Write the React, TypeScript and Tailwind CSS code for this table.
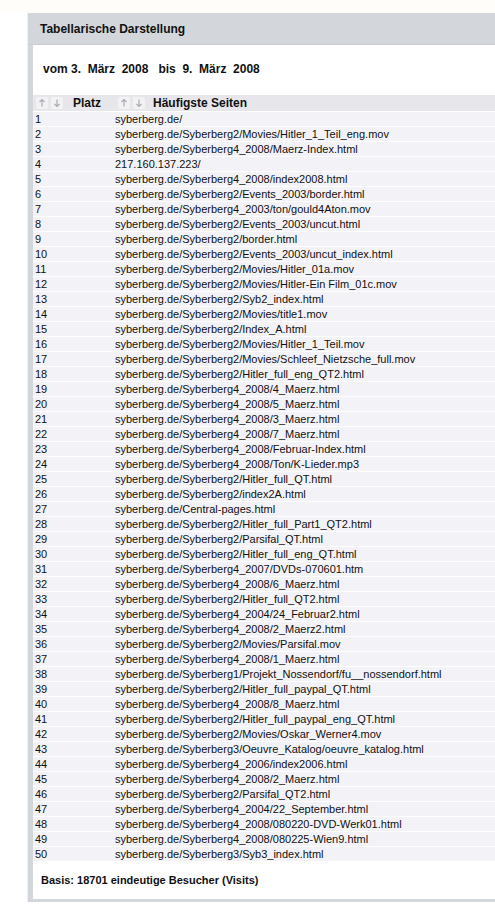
import React from 'react';

const pages = [
  'syberberg.de/',
  'syberberg.de/Syberberg2/Movies/Hitler_1_Teil_eng.mov',
  'syberberg.de/Syberberg4_2008/Maerz-Index.html',
  '217.160.137.223/',
  'syberberg.de/Syberberg4_2008/index2008.html',
  'syberberg.de/Syberberg2/Events_2003/border.html',
  'syberberg.de/Syberberg4_2003/ton/gould4Aton.mov',
  'syberberg.de/Syberberg2/Events_2003/uncut.html',
  'syberberg.de/Syberberg2/border.html',
  'syberberg.de/Syberberg2/Events_2003/uncut_index.html',
  'syberberg.de/Syberberg2/Movies/Hitler_01a.mov',
  'syberberg.de/Syberberg2/Movies/Hitler-Ein Film_01c.mov',
  'syberberg.de/Syberberg2/Syb2_index.html',
  'syberberg.de/Syberberg2/Movies/title1.mov',
  'syberberg.de/Syberberg2/Index_A.html',
  'syberberg.de/Syberberg2/Movies/Hitler_1_Teil.mov',
  'syberberg.de/Syberberg2/Movies/Schleef_Nietzsche_full.mov',
  'syberberg.de/Syberberg2/Hitler_full_eng_QT2.html',
  'syberberg.de/Syberberg4_2008/4_Maerz.html',
  'syberberg.de/Syberberg4_2008/5_Maerz.html',
  'syberberg.de/Syberberg4_2008/3_Maerz.html',
  'syberberg.de/Syberberg4_2008/7_Maerz.html',
  'syberberg.de/Syberberg4_2008/Februar-Index.html',
  'syberberg.de/Syberberg4_2008/Ton/K-Lieder.mp3',
  'syberberg.de/Syberberg2/Hitler_full_QT.html',
  'syberberg.de/Syberberg2/index2A.html',
  'syberberg.de/Central-pages.html',
  'syberberg.de/Syberberg2/Hitler_full_Part1_QT2.html',
  'syberberg.de/Syberberg2/Parsifal_QT.html',
  'syberberg.de/Syberberg2/Hitler_full_eng_QT.html',
  'syberberg.de/Syberberg4_2007/DVDs-070601.htm',
  'syberberg.de/Syberberg4_2008/6_Maerz.html',
  'syberberg.de/Syberberg2/Hitler_full_QT2.html',
  'syberberg.de/Syberberg4_2004/24_Februar2.html',
  'syberberg.de/Syberberg4_2008/2_Maerz2.html',
  'syberberg.de/Syberberg2/Movies/Parsifal.mov',
  'syberberg.de/Syberberg4_2008/1_Maerz.html',
  'syberberg.de/Syberberg1/Projekt_Nossendorf/fu__nossendorf.html',
  'syberberg.de/Syberberg2/Hitler_full_paypal_QT.html',
  'syberberg.de/Syberberg4_2008/8_Maerz.html',
  'syberberg.de/Syberberg2/Hitler_full_paypal_eng_QT.html',
  'syberberg.de/Syberberg2/Movies/Oskar_Werner4.mov',
  'syberberg.de/Syberberg3/Oeuvre_Katalog/oeuvre_katalog.html',
  'syberberg.de/Syberberg4_2006/index2006.html',
  'syberberg.de/Syberberg4_2008/2_Maerz.html',
  'syberberg.de/Syberberg2/Parsifal_QT2.html',
  'syberberg.de/Syberberg4_2004/22_September.html',
  'syberberg.de/Syberberg4_2008/080220-DVD-Werk01.html',
  'syberberg.de/Syberberg4_2008/080225-Wien9.html',
  'syberberg.de/Syberberg3/Syb3_index.html',
];

const SortArrows = () => (
  <span className="flex items-center gap-[3px]">
    {['M5 1.5 L5 8.5 M2.5 4 L5 1.5 L7.5 4', 'M5 1.5 L5 8.5 M2.5 6 L5 8.5 L7.5 6'].map((d) => (
      <span key={d} className="flex h-[12px] w-[12px] items-center justify-center rounded-[2px] bg-[#f2f2f4]">
        <svg width="10" height="10" viewBox="0 0 10 10" fill="none" stroke="#a9acb3" strokeWidth="1.2">
          <path d={d} />
        </svg>
      </span>
    ))}
  </span>
);

export default function App() {
  return (
    <div className="min-h-[909px] bg-white font-['Liberation_Sans',Arial,sans-serif] text-[#111]">
      <div className="h-[13px] bg-[#fffdf9]" />
      <div className="flex">
        <div className="w-[28px] shrink-0 border-r border-[#eeeeee]" />
        <div className="flex-1 bg-[#d3d6db] pb-[3px]">
          <div className="flex h-[32px] items-center border-b border-[#c9ccd2] pl-[12px] text-[12px] font-bold">
            Tabellarische Darstellung
          </div>
          <div className="ml-[5px] bg-white">
            <div className="flex h-[50px] items-center pl-[10px] pb-[2px] text-[12px] font-bold">
              vom 3.&nbsp; März&nbsp; 2008&nbsp;&nbsp; bis&nbsp; 9.&nbsp; März&nbsp; 2008
            </div>
            <div className="flex h-[17px] items-center border-b border-white bg-[#e7e7eb] text-[12px] font-bold">
              <div className="flex w-[82px] items-center gap-[10px] pl-[3px]">
                <SortArrows />
                <span>Platz</span>
              </div>
              <div className="flex items-center gap-[8px] pl-[3px]">
                <SortArrows />
                <span>Häufigste Seiten</span>
              </div>
            </div>
            {pages.map((p, i) => (
              <div
                key={i}
                className="flex h-[15px] items-center border-b border-white bg-[#f3f3f7] text-[11px] leading-none"
              >
                <div className="w-[82px] pl-[2px]">{i + 1}</div>
                <div className="whitespace-nowrap">{p}</div>
              </div>
            ))}
            <div className="flex h-[37px] items-center pl-[8px] text-[11px] font-bold">
              Basis: 18701 eindeutige Besucher (Visits)
            </div>
          </div>
        </div>
      </div>
    </div>
  );
}
